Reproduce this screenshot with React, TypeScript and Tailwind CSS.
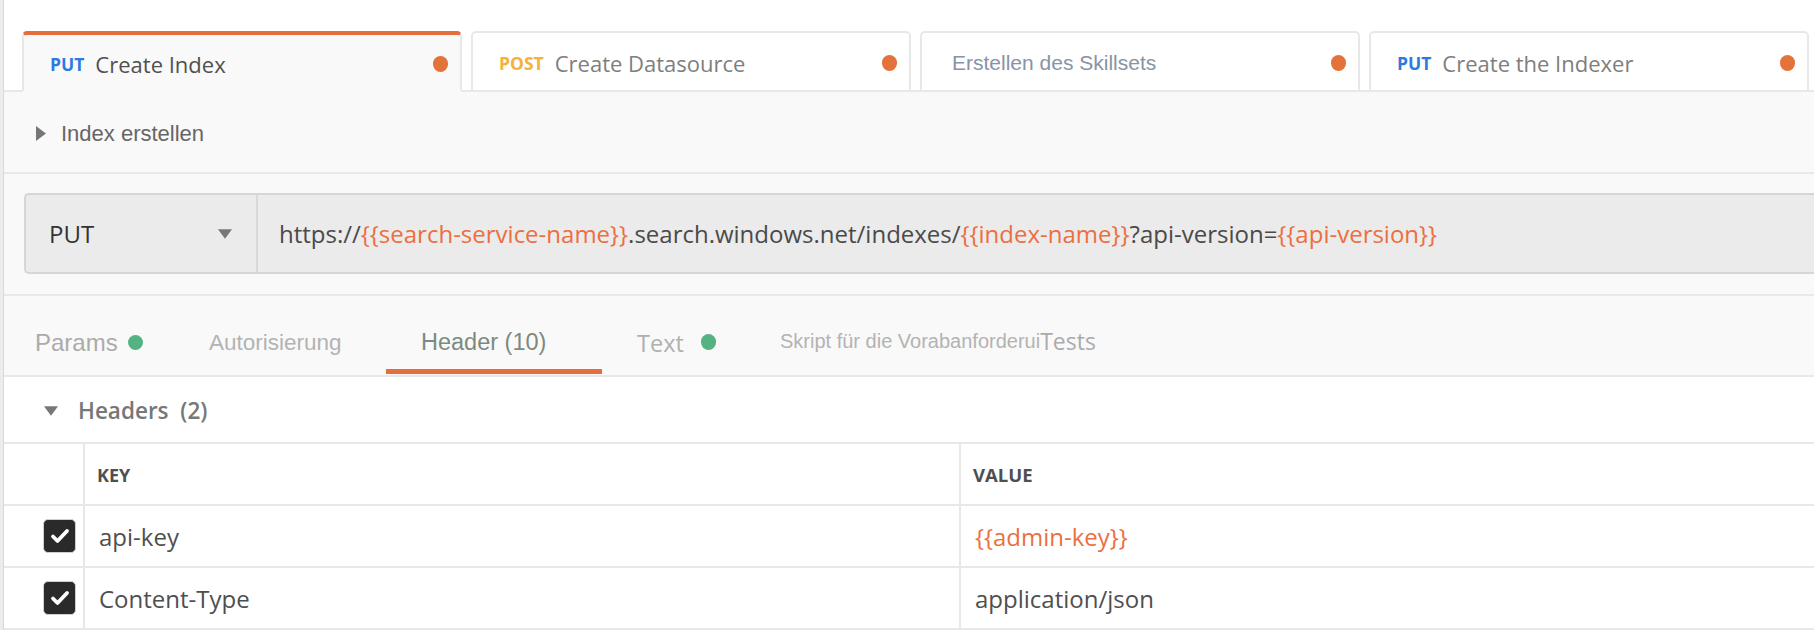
import React from 'react';

const OPEN = { fontFamily: '"Open Sans", "Noto Sans", sans-serif' };
const ARIAL = { fontFamily: '"Liberation Sans", Arial, sans-serif' };

type ReqTab = { method?: string; methodColor?: string; name: string; active?: boolean; plain?: boolean };

const tabs: ReqTab[] = [
  { method: 'PUT', methodColor: 'text-[#2d7be0]', name: 'Create Index', active: true },
  { method: 'POST', methodColor: 'text-[#f6b13a]', name: 'Create Datasource' },
  { name: 'Erstellen des Skillsets', plain: true },
  { method: 'PUT', methodColor: 'text-[#2d7be0]', name: 'Create the Indexer' },
];

const Var: React.FC<{ children: React.ReactNode }> = ({ children }) => (
  <span className="text-[#ec6f40]">{children}</span>
);

const Check = () => (
  <div className="w-[33px] h-[34px] rounded-[5px] bg-[#2a2a2a] border border-[#d0d0d0] flex items-center justify-center">
    <svg viewBox="0 0 24 24" className="w-[24px] h-[24px]" fill="none" stroke="white" strokeWidth={3.8} strokeLinecap="round" strokeLinejoin="round">
      <path d="M5 12.5l4.5 4.5L19 7" />
    </svg>
  </div>
);

const RequestTab: React.FC<{ tab: ReqTab }> = ({ tab }) => (
  <div
    className={`w-[440px] h-[61px] -mb-[2px] flex items-center pl-[26px] pr-[12px] pt-[3px] rounded-t-[5px] border-2 ${
      tab.active
        ? 'bg-[#f9f9f9] border-[#e8e8e8] border-t-[4px] border-t-[#e36f3e] border-b-[#f9f9f9]'
        : 'bg-white border-[#e8e8e8]'
    }`}
  >
    {tab.method && (
      <span className={`text-[17.5px] font-bold mr-[11px] mt-[1px] ${tab.methodColor}`} style={OPEN}>
        {tab.method}
      </span>
    )}
    {tab.plain ? (
      <span className="text-[21px] text-[#8893a5] pl-[4px]" style={ARIAL}>{tab.name}</span>
    ) : (
      <span className={`text-[22px] ${tab.active ? 'text-[#505050]' : 'text-[#7e7e7e]'}`} style={OPEN}>{tab.name}</span>
    )}
    <span className="ml-auto w-[15px] h-[16px] rounded-full bg-[#e4733b]" />
  </div>
);

export default function App() {
  return (
    <div className="w-[1814px] h-[630px] bg-white flex overflow-hidden">
      <div className="w-[4px] shrink-0 bg-[#ececec] border-r border-[#dadada]" />
      <div className="flex-1 flex flex-col min-w-0">
        {/* request tabs */}
        <div className="h-[92px] shrink-0 flex items-end gap-[9px] pl-[18px] border-b-2 border-[#e8e8e8]">
          {tabs.map((t, i) => (
            <RequestTab key={i} tab={t} />
          ))}
        </div>

        <div className="bg-[#f9f9f9] flex flex-col shrink-0">
          {/* description row */}
          <div className="h-[82px] flex items-center pl-[32px] pt-[2px] border-b-2 border-[#e8e8e8]">
            <svg viewBox="0 0 10 15" className="w-[10px] h-[15px] mr-[15px]" fill="#777">
              <path d="M0 0L10 7.5L0 15Z" />
            </svg>
            <span className="text-[22px] text-[#666]" style={ARIAL}>Index erstellen</span>
          </div>

          {/* url bar */}
          <div className="pt-[19px] pb-[20px] pl-[20px] border-b-2 border-[#e8e8e8]">
            <div className="h-[81px] flex bg-[#ebebeb] border-2 border-r-0 border-[#d6d6d6] rounded-l-[5px]">
              <div className="w-[232px] shrink-0 flex items-center pl-[23px] pr-[24px] border-r-2 border-[#d9d9d9]">
                <span className="text-[24px] text-[#333] font-medium" style={OPEN}>PUT</span>
                <svg viewBox="0 0 12 8" className="ml-auto w-[14px] h-[10px]" fill="#777">
                  <path d="M0 0H12L6 8Z" />
                </svg>
              </div>
              <div className="flex items-center pl-[21px] text-[24px] text-[#4a4a4a] whitespace-nowrap" style={OPEN}>
                https://<Var>{'{{search-service-name}}'}</Var>.search.windows.net/indexes/<Var>{'{{index-name}}'}</Var>?api-version=<Var>{'{{api-version}}'}</Var>
              </div>
            </div>
          </div>

          {/* section tabs */}
          <div className="h-[81px] flex items-stretch pl-[31px] border-b-2 border-[#e8e8e8] whitespace-nowrap">
            <div className="w-[174px] flex items-center pt-[14px] text-[24px] text-[#ababab]" style={ARIAL}>
              Params
              <span className="ml-[10px] w-[15px] h-[15px] rounded-full bg-[#55b382]" />
            </div>
            <div className="w-[177px] flex items-center pt-[15px] text-[22.5px] text-[#b3b3b3]" style={ARIAL}>Autorisierung</div>
            <div className="relative w-[216px] flex items-center pt-[15px] pl-[35px] text-[23.5px] text-[#7b8b80]" style={ARIAL}>
              Header (10)
              <span className="absolute left-0 right-0 bottom-[1px] h-[5px] bg-[#e36f3e]" />
            </div>
            <div className="w-[178px] flex items-center pt-[17px] pl-[35px] text-[23.5px] text-[#b0b0b0]" style={OPEN}>
              Text
              <span className="ml-[17px] -mt-[4px] w-[15px] h-[16px] rounded-full bg-[#55b382]" />
            </div>
            <div className="flex items-center pt-[11px]">
              <span className="text-[20px] text-[#b3b3b3]" style={ARIAL}>Skript für die Vorabanforderui</span>
              <span className="text-[23px] text-[#ababab]" style={OPEN}>Tests</span>
            </div>
          </div>
        </div>

        {/* headers section */}
        <div className="h-[65px] shrink-0 flex items-center pl-[40px] pt-[2px]">
          <svg viewBox="0 0 12 8" className="w-[14px] h-[10px] mr-[20px]" fill="#777">
            <path d="M0 0H12L6 8Z" />
          </svg>
          <span className="text-[22.5px] font-semibold text-[#777]" style={OPEN}>Headers&nbsp;&nbsp;(2)</span>
        </div>

        <div className="grid grid-cols-[81px_876px_1fr] border-t-2 border-[#e8e8e8]" style={OPEN}>
          <div className="h-[62px] border-b-2 border-r-2 border-[#e8e8e8]" />
          <div className="h-[62px] flex items-center pl-[12px] pt-[2px] border-b-2 border-r-2 border-[#e8e8e8] text-[18px] font-bold text-[#4f4f4f]">KEY</div>
          <div className="h-[62px] flex items-center pl-[12px] pt-[2px] border-b-2 border-[#e8e8e8] text-[18.5px] font-bold text-[#4f4f4f]">VALUE</div>

          <div className="h-[62px] flex items-center justify-end pr-[7px] border-b-2 border-r-2 border-[#e8e8e8]"><Check /></div>
          <div className="h-[62px] flex items-center pl-[14px] pt-[1px] border-b-2 border-r-2 border-[#e8e8e8] text-[24px] text-[#4f4f4f]">api-key</div>
          <div className="h-[62px] flex items-center pl-[14px] pt-[1px] border-b-2 border-[#e8e8e8] text-[24px]"><Var>{'{{admin-key}}'}</Var></div>

          <div className="h-[62px] flex items-center justify-end pr-[7px] border-b-2 border-r-2 border-[#e8e8e8]"><Check /></div>
          <div className="h-[62px] flex items-center pl-[14px] pt-[1px] border-b-2 border-r-2 border-[#e8e8e8] text-[24px] text-[#4f4f4f]">Content-Type</div>
          <div className="h-[62px] flex items-center pl-[14px] pt-[1px] border-b-2 border-[#e8e8e8] text-[24px] text-[#4f4f4f]">application/json</div>
        </div>
      </div>
    </div>
  );
}
